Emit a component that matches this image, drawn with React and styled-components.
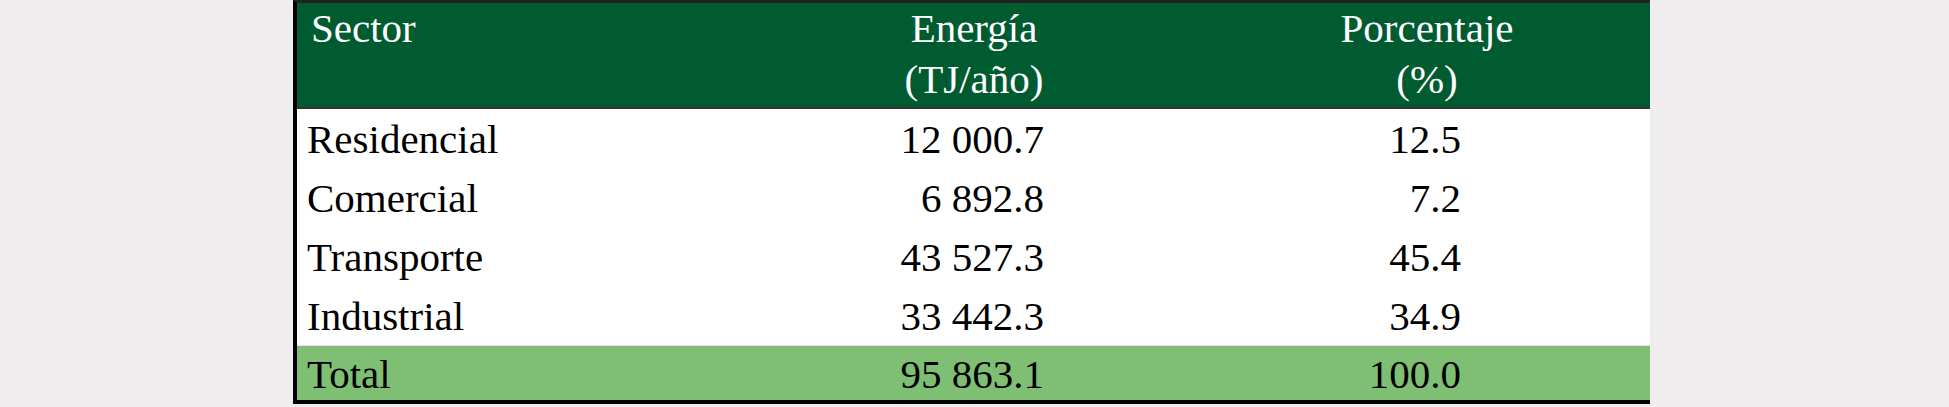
import React from 'react';
import styled, { createGlobalStyle } from 'styled-components';

const GlobalStyle = createGlobalStyle`
  html, body {
    margin: 0;
    padding: 0;
    background: #efedee;
  }
  body {
    font-family: "Liberation Serif", "Times New Roman", serif;
  }
`;

const Page = styled.div`
  padding-left: 293px;
`;

const Table = styled.div`
  width: 1353px;
  border-left: 4px solid #000;
  border-top: 3px solid #222;
  border-bottom: 4px solid #000;
  font-size: 41px;
`;

const Row = styled.div`
  display: grid;
  grid-template-columns: 447px 460px 446px;
  background: ${(p) => p.$bg || '#fff'};
  color: ${(p) => p.$color || '#000'};
  height: ${(p) => p.$height}px;
  line-height: ${(p) => p.$line}px;
  border-top: ${(p) => p.$topLine || 'none'};
  border-bottom: ${(p) => p.$divider || 'none'};
  box-sizing: border-box;
  padding-top: ${(p) => p.$padTop || 0}px;
`;

const Cell = styled.div`
  text-align: ${(p) => p.$align || 'left'};
  padding-left: ${(p) => p.$padLeft || 0}px;
  padding-right: ${(p) => p.$padRight || 0}px;
  white-space: pre;
`;

const rows = [
  ['Residencial', '12 000.7', '12.5'],
  ['Comercial', '6 892.8', '7.2'],
  ['Transporte', '43 527.3', '45.4'],
  ['Industrial', '33 442.3', '34.9'],
];

export default function App() {
  return (
    <Page>
      <GlobalStyle />
      <Table>
        <Row $bg="#005c30" $color="#fff" $height={106} $line={51} $divider="2px solid #333">
          <Cell $padLeft={14}>Sector</Cell>
          <Cell $align="center">Energía<br />(TJ/año)</Cell>
          <Cell $align="center">Porcentaje<br />(%)</Cell>
        </Row>
        {rows.map(([sector, energy, pct]) => (
          <Row key={sector} $height={59} $line={58} $padTop={1}>
            <Cell $padLeft={10}>{sector}</Cell>
            <Cell $align="right" $padRight={160}>{energy}</Cell>
            <Cell $align="right" $padRight={189}>{pct}</Cell>
          </Row>
        ))}
        <Row $bg="#7fbf74" $height={55} $line={55} $padTop={1} $topLine="1px solid #e4e4e4">
          <Cell $padLeft={10}>Total</Cell>
          <Cell $align="right" $padRight={160}>95 863.1</Cell>
          <Cell $align="right" $padRight={189}>100.0</Cell>
        </Row>
      </Table>
    </Page>
  );
}
